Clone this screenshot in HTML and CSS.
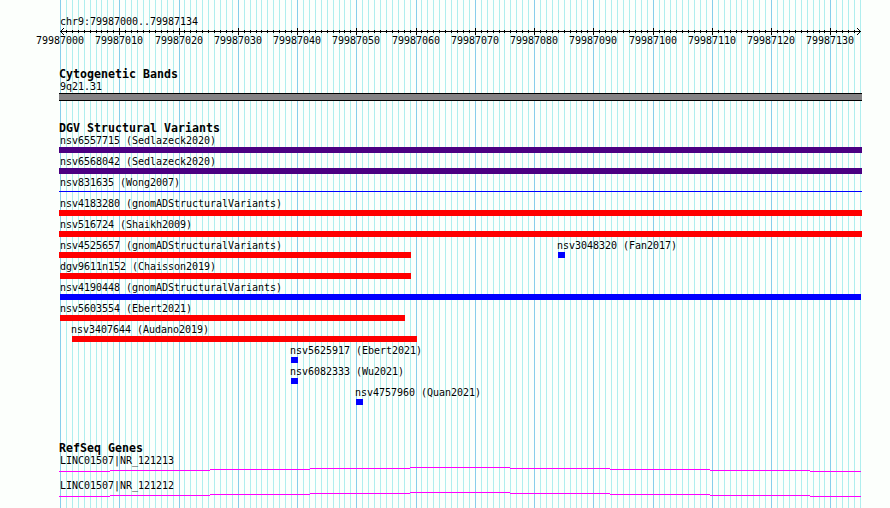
FILE: index.html
```
<!DOCTYPE html>
<html lang="en">
<head>
  <meta charset="UTF-8" />
  <title>chr9:79987000..79987134</title>
  <link rel="stylesheet" href="styles.css">
</head>
<body>
  <div class="browser">
    <svg class="grid" id="grid" width="890" height="508" shape-rendering="crispEdges"></svg>

    <header class="ruler">
      <div class="region">chr9:79987000..79987134</div>
      <svg id="axis" class="axis" width="890" height="9" shape-rendering="crispEdges"></svg>
      <div class="ticks" id="ticks"></div>
    </header>

    <section class="track cyto">
      <h2>Cytogenetic Bands</h2>
      <div class="label">9q21.31</div>
      <div class="band"></div>
    </section>

    <section class="track variants">
      <h2>DGV Structural Variants</h2>
      <div id="variants"></div>
    </section>

    <section class="track genes">
      <h2>RefSeq Genes</h2>
      <div id="genes"></div>
    </section>
  </div>
  <script src="script.js"></script>
</body>
</html>
```
FILE: styles.css
```
body {
  margin: 0;
  background: #fcfffc;
  color: #000;
  font-family: "DejaVu Sans Mono", "Liberation Mono", monospace;
  font-size: 10px;
  line-height: 14px;
  letter-spacing: -0.02px;
}

.browser {
  position: relative;
  width: 890px;
  height: 508px;
  overflow: hidden;
}

.grid {
  position: absolute;
  top: 0;
  left: 0;
  z-index: -1;
}

svg {
  display: block;
}

.ruler {
  height: 68px;
  padding-top: 15px;
  box-sizing: border-box;
}

.region {
  height: 12px;
  padding-left: 60px;
}

.ticks {
  display: grid;
  margin-top: -2px;
}

.tick {
  grid-area: 1 / 1;
}

.track {
  padding-left: 59px;
}

.cyto {
  height: 54px;
}

.variants {
  height: 320px;
}

h2 {
  margin: 0;
  height: 12px;
  font-size: 11.6px;
  line-height: 13px;
  font-weight: bold;
  letter-spacing: 0.017px;
}

.label {
  height: 13px;
  padding-left: 1px;
  white-space: nowrap;
}

.band {
  width: 803px;
  height: 8px;
  box-sizing: border-box;
  border: solid #000;
  border-width: 1px 0;
  background: #848284;
}

.row {
  display: grid;
  height: 21px;
}

.feature {
  grid-area: 1 / 1;
}

.bar {
  height: 6px;
}

.purple { background: #4b0082; }
.red { background: #f00; }
.blue { background: #00f; }

.thin {
  height: 1px;
  margin-top: 2px;
}

.gene {
  height: 25px;
}
```
FILE: script.js
```
const START = 79987000;
const BASES = 135;
const LEFT = 60;
const baseX = i => Math.round(LEFT + i * 800 / BASES);

function rect(x, y, w, h, fill) {
  return `<rect x="${x}" y="${y}" width="${w}" height="${h}" fill="${fill}"/>`;
}

// grid, axis and tick labels
let grid = "";
let axis = rect(60, 4, 801, 1, "#000");
let ticks = "";
for (let i = 0; i <= BASES; i++) {
  const x = baseX(i);
  const major = i % 10 === 0;
  grid += rect(x, 0, 1, 508, major ? "#87ceeb" : "#afeeee");
  if (i > 0 && i < BASES) {
    axis += major ? rect(x, 1, 1, 7, "#000") : rect(x, 3, 1, 3, "#000");
  }
  if (major) {
    ticks += `<div class="tick" style="margin-left:${x - 24}px">${START + i}</div>`;
  }
}
for (let k = 1; k <= 3; k++) {
  axis += rect(60 + k, 4 - k, 1, 1, "#000") + rect(60 + k, 4 + k, 1, 1, "#000");
  axis += rect(860 - k, 4 - k, 1, 1, "#000") + rect(860 - k, 4 + k, 1, 1, "#000");
}
document.getElementById("grid").innerHTML = grid;
document.getElementById("axis").innerHTML = axis;
document.getElementById("ticks").innerHTML = ticks;

// each row holds [name, bar start, bar end, style, label start]
const rows = [
  [["nsv6557715 (Sedlazeck2020)", 59, 862, "purple", 60]],
  [["nsv6568042 (Sedlazeck2020)", 59, 862, "purple", 60]],
  [["nsv831635 (Wong2007)", 59, 862, "blue thin", 60]],
  [["nsv4183280 (gnomADStructuralVariants)", 59, 862, "red", 60]],
  [["nsv516724 (Shaikh2009)", 59, 862, "red", 60]],
  [["nsv4525657 (gnomADStructuralVariants)", 59, 411, "red", 60],
   ["nsv3048320 (Fan2017)", 558, 565, "blue", 557]],
  [["dgv9611n152 (Chaisson2019)", 60, 411, "red", 60]],
  [["nsv4190448 (gnomADStructuralVariants)", 60, 861, "blue", 60]],
  [["nsv5603554 (Ebert2021)", 60, 405, "red", 60]],
  [["nsv3407644 (Audano2019)", 72, 417, "red", 71]],
  [["nsv5625917 (Ebert2021)", 291, 298, "blue", 290]],
  [["nsv6082333 (Wu2021)", 291, 298, "blue", 290]],
  [["nsv4757960 (Quan2021)", 356, 363, "blue", 355]]
];
document.getElementById("variants").innerHTML = rows.map(row =>
  `<div class="row">` + row.map(([name, from, to, style, labelX]) =>
    `<div class="feature">
      <div class="label" style="margin-left:${labelX - 60}px">${name}</div>
      <div class="bar ${style}" style="margin-left:${from - 59}px;width:${to - from}px"></div>
    </div>`).join("") + `</div>`).join("");

// introns rise one pixel per step towards the middle
const steps = [59, 110, 210, 310, 410, 510, 610, 710, 810, 861];
let intron = "";
for (let i = 0; i < steps.length - 1; i++) {
  intron += rect(steps[i] - 59, Math.abs(4 - i), steps[i + 1] - steps[i], 1, "#f0f");
}
document.getElementById("genes").innerHTML = ["NR_121213", "NR_121212"].map(id =>
  `<div class="gene">
    <div class="label">LINC01507|${id}</div>
    <svg width="802" height="5" shape-rendering="crispEdges">${intron}</svg>
  </div>`).join("");
```
